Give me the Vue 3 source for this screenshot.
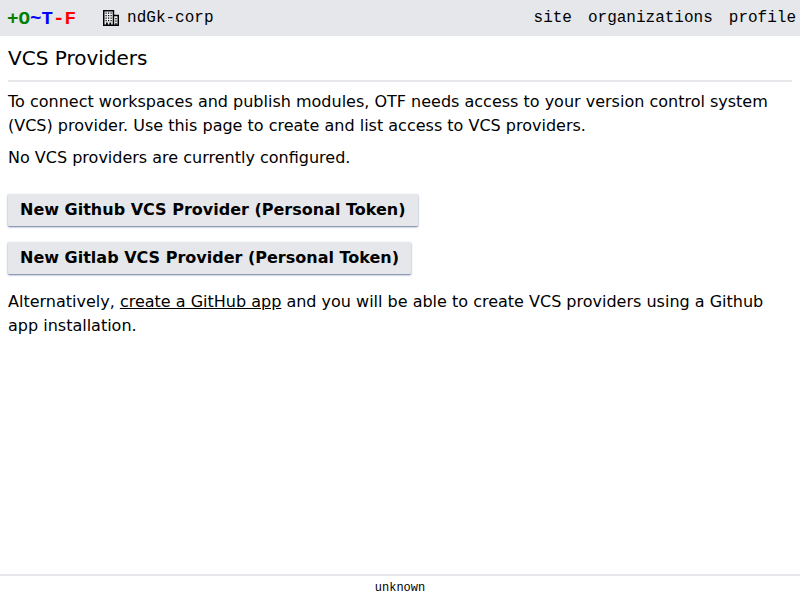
<script setup>
const brand = [
  { text: '+O', tone: 'green' },
  { text: '~T', tone: 'blue' },
  { text: '-F', tone: 'red' },
]
const links = ['site', 'organizations', 'profile']
const providers = ['Github', 'Gitlab']
</script>

<template>
  <div class="page">
    <header class="bar">
      <a class="brand"><span v-for="part in brand" :key="part.text" :class="part.tone">{{ part.text }}</span></a>
      <div class="org">
        <svg class="org-icon" viewBox="0 0 16 16" width="16" height="16">
          <path d="M.75 15.250V.75h9.700v14.500zM10.450 5.600h4.800v9.650h-4.800z" fill="#eff0f2" stroke="#000" stroke-width="1.500" />
          <path d="M2.500 2.500h1.200v1.300h-1.200zM5 2.500h1.200v1.300h-1.200zM7.500 2.500h1.200v1.300h-1.200zM2.500 5h1.200v1.300h-1.200zM5 5h1.200v1.300h-1.200zM7.500 5h1.200v1.300h-1.200zM2.500 7.500h1.200v1.300h-1.200zM5 7.500h1.200v1.300h-1.200zM7.500 7.500h1.200v1.300h-1.200zM2.500 10h1.200v1.300h-1.200zM5 10h1.200v1.300h-1.200zM7.500 10h1.200v1.300h-1.200zM12.300 8h1.300v1.200h-1.300zM12.300 10.500h1.300v1.200h-1.300zM3 12.500h1.800v3h-1.800zM6.400 12.500h1.800v3h-1.800zM12.300 13h1.300v2h-1.300z" />
        </svg>
        <span>ndGk-corp</span>
      </div>
      <nav class="links"><a v-for="link in links" :key="link">{{ link }}</a></nav>
    </header>
    <div class="title">VCS Providers</div>
    <main class="content">
      <p>To connect workspaces and publish modules, OTF needs access to your version control system (VCS) provider. Use this page to create and list access to VCS providers.</p>
      <p>No VCS providers are currently configured.</p>
      <div class="actions">
        <button v-for="name in providers" :key="name" class="btn">New {{ name }} VCS Provider (Personal Token)</button>
      </div>
      <p>Alternatively, <a class="link">create a GitHub app</a> and you will be able to create VCS providers using a Github app installation.</p>
    </main>
    <footer class="footer">unknown</footer>
  </div>
</template>

<style>
body { margin: 0; }
</style>

<style scoped>
.page {
  box-sizing: border-box;
  height: 100vh;
  display: flex;
  flex-direction: column;
  background: #fff;
  color: #000;
  font: 16px/24px "DejaVu Sans", sans-serif;
}
.bar {
  box-sizing: border-box;
  height: 36px;
  display: flex;
  align-items: center;
  padding: 0 4px 0 7px;
  background: #e5e7eb;
  font-family: "Liberation Mono", monospace;
}
.brand { padding-top: 2px; font-size: 19.2px; font-weight: 700; }
.green { color: #008000; }
.blue { color: #00f; }
.red { color: #f00; }
.org { display: flex; align-items: center; gap: 8px; margin-left: 27px; }
.org-icon { display: block; }
.links { display: flex; gap: 16px; margin-left: auto; }
.title {
  margin: 8px 8px 0;
  padding-bottom: 8px;
  border-bottom: 2px solid #e5e7eb;
  font-size: 20px;
  line-height: 28px;
}
.content {
  flex: 1;
  display: flex;
  flex-direction: column;
  gap: 8px;
  padding: 8px;
}
p { margin: 0; }
.actions {
  display: flex;
  flex-direction: column;
  align-items: flex-start;
  gap: 16px;
  margin: 16px 0 8px;
}
.btn {
  height: 32px;
  padding: 0 12px;
  border: 0;
  background: #e5e7eb;
  color: #000;
  font: 700 16px/24px "DejaVu Sans", sans-serif;
  border-radius: 1px;
  box-shadow: 0 1px 2px #66769c;
}
.link { text-decoration: underline; }
.footer {
  box-sizing: border-box;
  height: 26px;
  border-top: 2px solid #e5e7eb;
  text-align: center;
  font: 12px/24px "Liberation Mono", monospace;
}
</style>
